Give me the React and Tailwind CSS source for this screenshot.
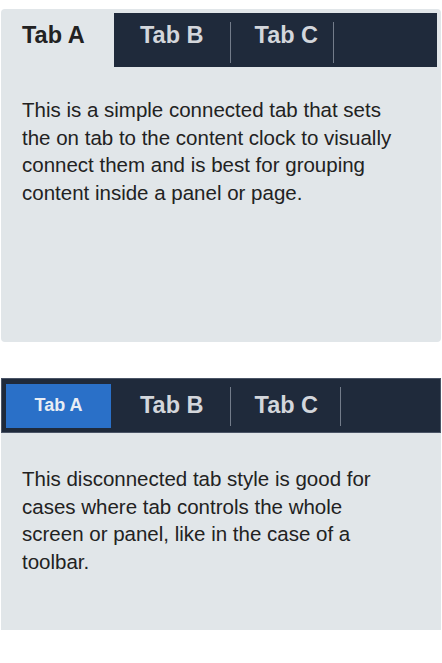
import React from 'react';

const font = { fontFamily: '"Liberation Sans", Arial, sans-serif' };

const ConnectedTabs = () => (
    <div className="rounded-[4px] bg-[#e1e6e9] pt-1 pr-1 h-[333px]">
        <div className="flex h-[54px]">
            <div className="w-[113px] pl-[21px] pt-[11px] text-[23.5px] leading-none font-bold text-[#222]">Tab A</div>
            <div className="flex-1 flex bg-[#1f2a3b]">
                <div className="pl-[26px] pr-[26px] pt-[11px] text-[23.5px] leading-none font-bold text-[#d3d6db]">Tab B</div>
                <div className="w-px h-[41px] mt-[9px] bg-[#737c8a]" />
                <div className="pl-[24px] pr-[15px] pt-[11px] text-[23.5px] leading-none font-bold text-[#d3d6db]">Tab C</div>
                <div className="w-px h-[41px] mt-[9px] bg-[#737c8a]" />
            </div>
        </div>
        <p className="pl-[21px] pr-[39px] pt-[29px] text-[20.5px] leading-[27.5px] text-[#222]">
            This is a simple connected tab that sets the on tab to the content clock to visually connect them and is best for grouping content inside a panel or page.
        </p>
    </div>
);

const DisconnectedTabs = () => (
    <div className="mt-[36px]">
        <div className="flex items-center h-[55px] bg-[#1f2a3b] border border-[#4a5466] pl-[4px]">
            <div className="w-[105px] h-[44px] flex items-center justify-center bg-[#2a70c8] text-[18px] font-bold text-[#e8edf4]">Tab A</div>
            <div className="pl-[29px] pr-[26px] text-[23.5px] leading-none font-bold text-[#d3d6db]">Tab B</div>
            <div className="w-px h-[39px] self-start mt-[8px] bg-[#737c8a]" />
            <div className="pl-[24px] pr-[22px] text-[23.5px] leading-none font-bold text-[#d3d6db]">Tab C</div>
            <div className="w-px h-[39px] self-start mt-[8px] bg-[#737c8a]" />
        </div>
        <p className="h-[197px] bg-[#e1e6e9] pl-[21px] pr-[39px] pt-[32px] text-[20.5px] leading-[27.5px] text-[#222]">
            This disconnected tab style is good for cases where tab controls the whole screen or panel, like in the case of a toolbar.
        </p>
    </div>
);

export default function App() {
    return (
        <div className="min-h-screen bg-white pt-[9px] px-px" style={font}>
            <ConnectedTabs />
            <DisconnectedTabs />
        </div>
    );
}
